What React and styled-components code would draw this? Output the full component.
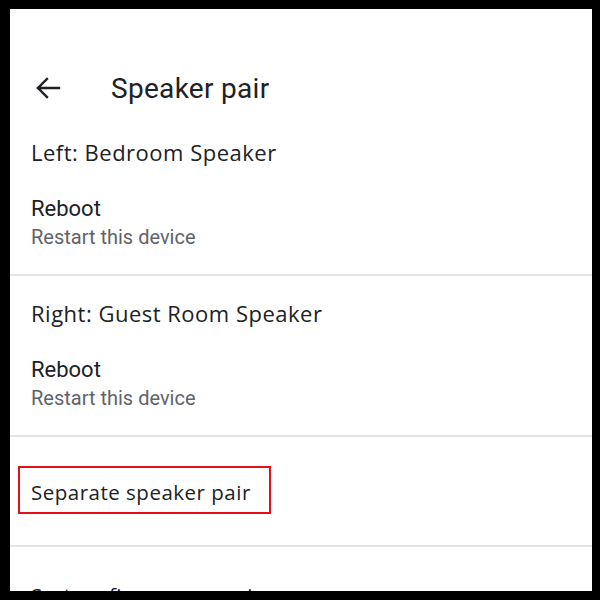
import React from "react";
import styled, { createGlobalStyle } from "styled-components";

const GlobalStyle = createGlobalStyle`
  html, body {
    margin: 0;
    padding: 0;
    background: #000;
  }
  body {
    font-family: Roboto, "Liberation Sans", Arial, sans-serif;
    -webkit-font-smoothing: antialiased;
  }
`;

const Frame = styled.div`
  width: 600px;
  height: 600px;
  box-sizing: border-box;
  padding: 9px 8px 9px 10px;
  background: #000;
`;

const Screen = styled.div`
  height: 100%;
  background: #fff;
  overflow: hidden;
  padding-top: 52px;
  box-sizing: border-box;
`;

const Header = styled.header`
  display: flex;
  align-items: center;
  height: 56px;
  padding-left: 25px;
`;

const BackButton = styled.button`
  display: flex;
  align-items: center;
  justify-content: center;
  width: 26px;
  height: 24px;
  padding: 0;
  margin-top: -2px;
  border: none;
  background: none;
  color: #202124;
`;

const Title = styled.h1`
  margin: 0 0 0 50px;
  font-size: 28px;
  font-weight: 400;
  letter-spacing: 0.3px;
  line-height: 32px;
  color: #202124;
`;

const Section = styled.section`
  padding: ${(p) => (p.$first ? "21px" : "23px")} 21px 25px;
  border-bottom: 2px solid #e3e4e6;
`;

const SectionTitle = styled.h2`
  margin: 0 0 30px;
  font-family: "Open Sans", Roboto, sans-serif;
  font-size: 22px;
  font-weight: 400;
  letter-spacing: 0.5px;
  line-height: 28px;
  color: #202124;
`;

const ItemTitle = styled.div`
  font-size: 22px;
  line-height: 26px;
  color: #202124;
  margin-bottom: 3px;
`;

const ItemSubtitle = styled.div`
  font-size: 20px;
  line-height: 24px;
  color: #5f6368;
`;

const Row = styled.div`
  padding: ${(p) => p.$top}px 21px ${(p) => p.$bottom}px;
  border-bottom: ${(p) => (p.$divider ? "2px solid #e3e4e6" : "none")};
`;

const Label = styled.div`
  font-family: "Open Sans", Roboto, sans-serif;
  font-size: 20.5px;
  letter-spacing: 0.5px;
  line-height: 24px;
  color: #202124;
`;

const Highlight = styled.span`
  display: inline-block;
  margin: -14px -20px -10px -13px;
  padding: 12px 18px 8px 11px;
  border: 2px solid #e3101c;
`;

const ArrowBack = () => (
  <svg width="26" height="24" viewBox="0 0 26 24" fill="none">
    <path
      d="M24 12H3M12 3L3 12L12 21"
      stroke="currentColor"
      strokeWidth="2.4"
      strokeLinecap="square"
    />
  </svg>
);

const DeviceSection = ({ title, first }) => (
  <Section $first={first}>
    <SectionTitle>{title}</SectionTitle>
    <ItemTitle>Reboot</ItemTitle>
    <ItemSubtitle>Restart this device</ItemSubtitle>
  </Section>
);

export default function App() {
  return (
    <>
      <GlobalStyle />
      <Frame>
        <Screen>
          <Header>
            <BackButton aria-label="Back">
              <ArrowBack />
            </BackButton>
            <Title>Speaker pair</Title>
          </Header>
          <DeviceSection first title="Left: Bedroom Speaker" />
          <DeviceSection title="Right: Guest Room Speaker" />
          <Row $top={43} $bottom={41} $divider>
            <Label>
              <Highlight>Separate speaker pair</Highlight>
            </Label>
          </Row>
          <Row $top={36} $bottom={20}>
            <Label>System firmware version</Label>
          </Row>
        </Screen>
      </Frame>
    </>
  );
}
